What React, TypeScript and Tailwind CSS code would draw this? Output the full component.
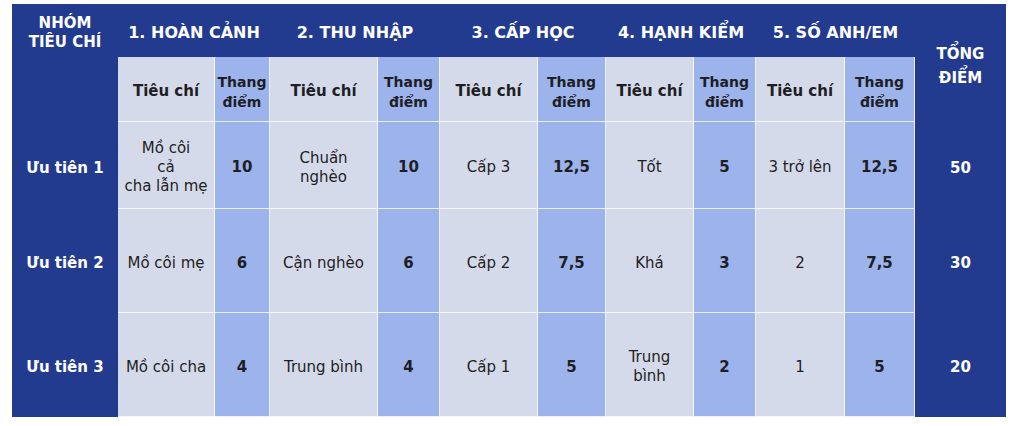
import React from 'react'

const cols = 'grid-cols-[106px_97px_55px_108px_62px_98px_68px_88px_62px_89px_70px_91px]'
const rows = 'grid-rows-[53px_65px_87px_104px_104px]'

const groups = ['1. HOÀN CẢNH', '2. THU NHẬP', '3. CẤP HỌC', '4. HẠNH KIỂM', '5. SỐ ANH/EM']

type Pair = [React.ReactNode, string]

const data: { label: string; total: string; cells: Pair[] }[] = [
  {
    label: 'Ưu tiên 1',
    total: '50',
    cells: [
      [<>Mồ côi<br />cả<br />cha lẫn mẹ</>, '10'],
      [<>Chuẩn<br />nghèo</>, '10'],
      ['Cấp 3', '12,5'],
      ['Tốt', '5'],
      ['3 trở lên', '12,5'],
    ],
  },
  {
    label: 'Ưu tiên 2',
    total: '30',
    cells: [
      ['Mồ côi mẹ', '6'],
      ['Cận nghèo', '6'],
      ['Cấp 2', '7,5'],
      ['Khá', '3'],
      ['2', '7,5'],
    ],
  },
  {
    label: 'Ưu tiên 3',
    total: '20',
    cells: [
      ['Mồ côi cha', '4'],
      ['Trung bình', '4'],
      ['Cấp 1', '5'],
      [<>Trung<br />bình</>, '2'],
      ['1', '5'],
    ],
  },
]

const cell = 'flex items-center justify-center text-center pt-[5px]'
const light = `${cell} bg-[#d5daea] border-r border-b border-white/80`
const blue = `${cell} bg-[#9cb3ec] border-r border-b border-white/80`
const dark = `${cell} text-white`

export default function App() {
  return (
    <div className="min-h-[426px] bg-white pl-3 pt-1 font-['DejaVu_Sans',sans-serif]">
      <div className={`grid ${cols} ${rows} w-[994px] bg-[#233b8f] text-[#1e1e24]`}>
        {/* hàng tiêu đề 1 */}
        <div className={`${dark} text-[15px] font-bold leading-[19px]`}>
          NHÓM<br />TIÊU CHÍ
        </div>
        {groups.map((g) => (
          <div key={g} className={`${dark} col-span-2 text-[16px] font-bold whitespace-nowrap`}>
            {g}
          </div>
        ))}
        <div className={`${dark} row-span-2 text-[15px] font-bold leading-[24px]`}>
          TỔNG<br />ĐIỂM
        </div>

        {/* hàng tiêu đề 2 */}
        <div />
        {groups.map((g) => (
          <React.Fragment key={g + '-sub'}>
            <div className={`${light} text-[15px] font-bold`}>Tiêu chí</div>
            <div className={`${blue} text-[14px] font-bold leading-[20px]`}>
              Thang<br />điểm
            </div>
          </React.Fragment>
        ))}

        {/* dữ liệu */}
        {data.map((row) => (
          <React.Fragment key={row.label}>
            <div className={`${dark} text-[15px] font-bold`}>{row.label}</div>
            {row.cells.map(([text, score], i) => (
              <React.Fragment key={i}>
                <div className={`${light} text-[15px] leading-[19px]`}>{text}</div>
                <div className={`${blue} text-[15px] font-bold`}>{score}</div>
              </React.Fragment>
            ))}
            <div className={`${dark} text-[15px] font-bold`}>{row.total}</div>
          </React.Fragment>
        ))}
      </div>
    </div>
  )
}
